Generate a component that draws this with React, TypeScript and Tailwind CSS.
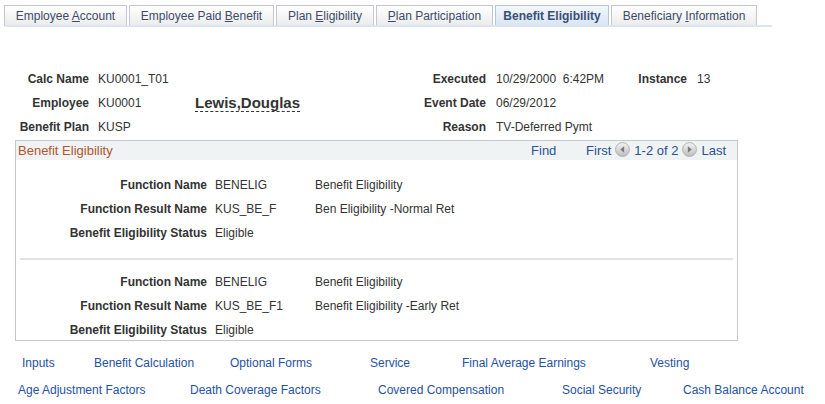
import React from "react";

const tabs = [
  { pre: "Employee ", u: "A", post: "ccount", w: 123 },
  { pre: "Employee Paid ", u: "B", post: "enefit", w: 145 },
  { pre: "Plan ", u: "E", post: "ligibility", w: 98 },
  { pre: "", u: "P", post: "lan Participation", w: 117 },
  { pre: "Benefit Eligibility", u: "", post: "", w: 114, active: true },
  { pre: "Beneficiary ", u: "I", post: "nformation", w: 146 },
];

const NavArrow = ({ dir }: { dir: "left" | "right" }) => (
  <svg width="15" height="15" viewBox="0 0 14 14" className="mx-[4px] mb-[2px]">
    <defs>
      <linearGradient id={"g" + dir} x1="0" y1="0" x2="0" y2="1">
        <stop offset="0" stopColor="#f4f4f4" />
        <stop offset="1" stopColor="#bdbdbd" />
      </linearGradient>
    </defs>
    <circle cx="7" cy="7" r="6.5" fill={"url(#g" + dir + ")"} stroke="#a9a9a9" strokeWidth="0.8" />
    {dir === "left" ? (
      <polygon points="8.5,4 5,7 8.5,10" fill="#7a7a7a" />
    ) : (
      <polygon points="5.5,4 9,7 5.5,10" fill="#7a7a7a" />
    )}
  </svg>
);

const Field = ({ label, value, desc }: { label: string; value: string; desc?: string }) => (
  <div className="flex h-[24px] items-center">
    <div className="w-[191px] text-right font-bold text-[#333]">{label}</div>
    <div className="w-[108px] pl-[8px] text-[#333]">{value}</div>
    <div className="text-[#333]">{desc}</div>
  </div>
);

const App = () => {
  return (
    <div className="w-[825px] h-[404px] bg-white text-[12px] font-['Liberation_Sans',Arial,sans-serif] overflow-hidden">
      {/* tabs */}
      <div className="pl-[4px] pt-[5px]">
        <div className="flex gap-[2px] w-[768px] border-b-[2px] border-[#dbe5f1]">
          {tabs.map((t, i) => (
            <div
              key={i}
              style={{ width: t.w }}
              className={
                "h-[20px] border border-b-0 flex items-center justify-center " +
                (t.active
                  ? "border-[#b5c4d8] bg-gradient-to-b from-[#f3f7fc] to-[#d9e6f4] font-bold text-[#3b4f73]"
                  : "border-[#c3c6cc] bg-gradient-to-b from-[#ffffff] to-[#ececec] text-[#3d4b69]")
              }
            >
              <span className="whitespace-pre">
                {t.pre}
                {t.u && <span className="underline">{t.u}</span>}
                {t.post}
              </span>
            </div>
          ))}
        </div>
      </div>

      {/* header info */}
      <div className="mt-[40px]">
        <div className="flex h-[24px] items-center">
          <div className="w-[89px] text-right font-bold text-[#333]">Calc Name</div>
          <div className="w-[311px] pl-[9px] text-[#333]">KU0001_T01</div>
          <div className="w-[86px] text-right font-bold text-[#333]">Executed</div>
          <div className="w-[112px] pl-[10px] text-[#333] whitespace-pre">10/29/2000  6:42PM</div>
          <div className="w-[89px] text-right font-bold text-[#333]">Instance</div>
          <div className="pl-[10px] text-[#333]">13</div>
        </div>
        <div className="flex h-[24px] items-center">
          <div className="w-[89px] text-right font-bold text-[#333]">Employee</div>
          <div className="w-[106px] pl-[9px] text-[#333]">KU0001</div>
          <div className="w-[205px]">
            <span className="text-[15px] font-bold text-[#333] border-b border-dashed border-[#333] leading-[17px] inline-block">
              Lewis,Douglas
            </span>
          </div>
          <div className="w-[86px] text-right font-bold text-[#333]">Event Date</div>
          <div className="pl-[10px] text-[#333]">06/29/2012</div>
        </div>
        <div className="flex h-[24px] items-center">
          <div className="w-[89px] text-right font-bold text-[#333]">Benefit Plan</div>
          <div className="w-[311px] pl-[9px] text-[#333]">KUSP</div>
          <div className="w-[86px] text-right font-bold text-[#333]">Reason</div>
          <div className="pl-[10px] text-[#333]">TV-Deferred Pymt</div>
        </div>
      </div>

      {/* group box */}
      <div className="ml-[15px] mt-[1px] w-[723px] h-[201px] border border-[#c8c8c8]">
        <div className="h-[19px] bg-[#f0f3f3] flex items-center">
          <div className="pl-[2px] text-[13px] text-[#b05530] flex-1">Benefit Eligibility</div>
          <div className="text-[13px] text-[#2b54a0] w-[55px]">Find</div>
          <div className="flex items-center text-[13px] text-[#2b4f8f] pr-[11px]">
            First
            <NavArrow dir="left" />
            1-2 of 2
            <NavArrow dir="right" />
            Last
          </div>
        </div>
        <div className="pt-[13px]">
          <Field label="Function Name" value="BENELIG" desc="Benefit Eligibility" />
          <Field label="Function Result Name" value="KUS_BE_F" desc="Ben Eligibility -Normal Ret" />
          <Field label="Benefit Eligibility Status" value="Eligible" />
        </div>
        <div className="mx-[4px] mt-[13px] h-[2px] bg-[#e2e2e2]" />
        <div className="pt-[10px]">
          <Field label="Function Name" value="BENELIG" desc="Benefit Eligibility" />
          <Field label="Function Result Name" value="KUS_BE_F1" desc="Benefit Eligibility -Early Ret" />
          <Field label="Benefit Eligibility Status" value="Eligible" />
        </div>
      </div>

      {/* links */}
      <div className="mt-[8px] text-[#2651a3]">
        <div className="flex h-[27px] items-center pl-[22px]">
          <div className="w-[72px]">Inputs</div>
          <div className="w-[136px]">Benefit Calculation</div>
          <div className="w-[140px]">Optional Forms</div>
          <div className="w-[92px]">Service</div>
          <div className="w-[188px]">Final Average Earnings</div>
          <div>Vesting</div>
        </div>
        <div className="flex h-[28px] items-center pl-[18px]">
          <div className="w-[172px]">Age Adjustment Factors</div>
          <div className="w-[188px]">Death Coverage Factors</div>
          <div className="w-[184px]">Covered Compensation</div>
          <div className="w-[121px]">Social Security</div>
          <div>Cash Balance Account</div>
        </div>
      </div>
    </div>
  );
};

export default App;
